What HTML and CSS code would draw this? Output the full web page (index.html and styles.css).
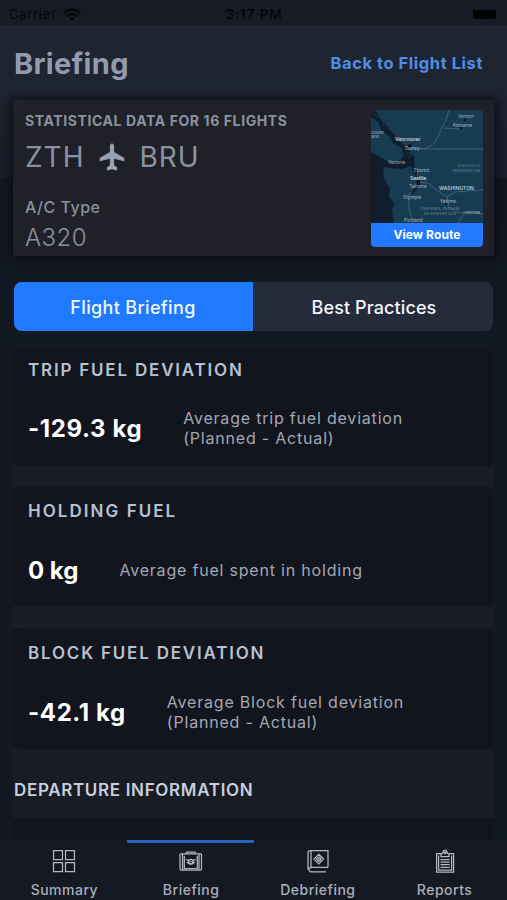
FILE: index.html
```html
<!DOCTYPE html>
<html lang="en">
<head>
<meta charset="utf-8">
<title>Briefing</title>
<link rel="stylesheet" href="styles.css">
</head>
<body>
<div class="app">
  <div class="status">
    <div class="status-left"><span class="carrier">Carrier</span>
      <svg class="wifi" width="18" height="13" viewBox="0 0 18 13"><g fill="none" stroke="#05070b" stroke-width="2.6"><path d="M1 5Q9-2 17 5"/><path d="M4 8.3Q9 4 14 8.3"/></g><path d="M6.3 10.2Q9 8 11.7 10.2L9 12.8Z" fill="#05070b"/></svg>
    </div>
    <span class="time">3:17 PM</span>
    <div class="status-right"><span class="battery"></span></div>
  </div>
  <header class="header">
    <h1 class="title">Briefing</h1>
    <a class="back">Back to Flight List</a>
  </header>
  <section class="flight">
    <div class="flight-info">
      <div class="stat">STATISTICAL DATA FOR 16 FLIGHTS</div>
      <div class="route"><span>ZTH</span>
        <svg class="plane" width="26" height="28" viewBox="0 0 26 28"><path fill="#98a2b3" d="M13 .5c-1.4 0-2.1 1.4-2.1 3.4v5.2L.7 15v3.3l10.2-2.6v6.6L7.9 24.6v2.9l5.1-1.2 5.1 1.2v-2.9l-3-2.3v-6.6l10.2 2.6V15L15.1 9.1V3.9c0-2-.7-3.4-2.1-3.4z"/></svg>
        <span>BRU</span></div>
      <div class="label">A/C Type</div>
      <div class="aircraft">A320</div>
    </div>
    <div class="route-box">
      <svg class="map" width="112" height="113" viewBox="0 0 112 113">
        <rect width="112" height="113" fill="#173c52"/>
        <path fill="#101d2d" d="M4 0L0 0V7L7 12 11 21 19 27 22 33 31 38 33 46 28 51 21 54 13 49 0 42V113H23L21 99 24 94 18 87 19 78 13 68 12 57 19 58 31 59 40 56 44 65 46 76 38 82 42 84 49 75 48 67 44 57 43 47 37 38 28 31 22 23 15 15 9 8Z"/>
        <g fill="none" stroke="#173c52" stroke-width="1"><path d="M3 5l8 4 2 7M34 44l7-2-3 7"/></g>
        <g fill="none" stroke="#426879" stroke-width=".9"><path d="M37 39H112M39 34L43 39H50C68 38 68 19 75 10L78 0M47 58L46 72 57 73Q64 80 76 87L84 82 112 80M46 72L38 85V98L42 113M76 87L78 97 88 103 94 102 112 104M94 102L87 113M73 18L90 19"/></g>
        <g fill="#050f1d"><circle cx="39" cy="36" r="2"/><circle cx="47" cy="72" r="2"/><circle cx="94" cy="10" r="1.2"/><circle cx="90" cy="18" r="1.2"/><circle cx="75" cy="94" r="1"/></g>
        <g class="places">
          <text x="24" y="31" class="city">Vancouver</text><text x="34" y="40">Surrey</text><text x="17" y="54">Victoria</text><text x="43" y="62">Everett</text><text x="39" y="70" class="city">Seattle</text><text x="38" y="78">Tacoma</text><text x="32" y="89">Olympia</text><text x="69" y="93">Yakima</text><text x="33" y="112">Portland</text><text x="87" y="8">Vernon</text><text x="82" y="17">Kelowna</text><text x="0" y="24" class="small">couver</text><text x="0" y="28" class="small">land</text><text x="94" y="104" class="small">Kennew</text>
          <text x="68" y="80" class="state">WASHINGTON</text>
          <text x="87" y="57" class="land">COLVILLE</text><text x="82" y="62" class="land narrow">RESERVATION</text><text x="50" y="100" class="land">YAKAMA INDIAN</text><text x="53" y="104.5" class="land">RESERVATION</text>
        </g>
      </svg>
      <button class="view">View Route</button>
    </div>
  </section>
  <nav class="tabs"><div class="tab tab-on"><span>Flight Briefing</span></div><div class="tab tab-off"><span>Best Practices</span></div></nav>
  <main class="content">
    <article class="card card-first"><h2>TRIP FUEL DEVIATION</h2><div class="row"><strong>-129.3 kg</strong><p>Average trip fuel deviation<br>(Planned - Actual)</p></div></article>
    <article class="card"><h2 class="wide">HOLDING FUEL</h2><div class="row"><strong class="zero">0 kg</strong><p>Average fuel spent in holding</p></div></article>
    <article class="card card-last"><h2>BLOCK FUEL DEVIATION</h2><div class="row"><strong>-42.1 kg</strong><p>Average Block fuel deviation<br>(Planned - Actual)</p></div></article>
    <h2 class="departure">DEPARTURE INFORMATION</h2>
    <div class="next-card"></div>
  </main>
  <footer class="bar">
    <div class="item"><svg width="24" height="24" viewBox="0 0 24 24"><g class="ic"><path d="M1.500 1.500h9v9h-9zM13.500 1.500h9v9h-9zM1.500 13.500h9v9h-9zM13.500 13.500h9v9h-9z"/></g></svg><span>Summary</span></div>
    <div class="item item-on"><svg width="24" height="24" viewBox="0 0 24 24"><g class="ic"><rect x="1" y="4.800" width="21.500" height="16.200" rx="1"/><path d="M3.500 5v16M20 5v16M6.800 4.500l.7-1.500h8.500l.7 1.500M5.300 6.800v12.700h13V6.800"/><path d="M6.800 10.500l3 .8M16.800 10.500l-3 .8M7.800 13q4 4 8 0"/><circle cx="11.8" cy="12.500" r="2.200"/></g><circle cx="11.8" cy="12.500" r=".8" fill="#c0c4cc"/></svg><span>Briefing</span></div>
    <div class="item"><svg width="24" height="24" viewBox="0 0 24 24"><g class="ic"><path d="M22 18.300H4.500a2.400 2.400 0 0 0 0 4.500H20M2 20.500V3.500Q2 1.500 4.100 1.500H22V18.300M5 1.500v16.500M12.800 5.300l4.800 4.800-4.800 4.800-4.800-4.800z"/><circle cx="12.800" cy="10.100" r="2"/><path d="M12 11l1.800-1.800"/></g></svg><span>Debriefing</span></div>
    <div class="item"><svg width="24" height="24" viewBox="0 0 24 24"><g class="ic"><path d="M8 4.500H3.600v18.500h17V4.500H16M5.600 6.500v14.500h13V6.500M8 7.500V5l2-.8Q9.500 1.300 12 1.300T14 4.200l2 .8V7.500zM7.500 10.500h9.200M7.500 13h9.200M7.500 15.600h9.200M7.500 18.300h9.200"/><circle cx="12" cy="3.800" r=".7"/></g></svg><span>Reports</span></div>
  </footer>
</div>
</body>
</html>
```
FILE: styles.css
```css
* { box-sizing: border-box; }
body { margin: 0; background: #121923; font-family: Inter, "Noto Sans", sans-serif; }
h1, h2, p { margin: 0; }
span, strong, a { white-space: nowrap; }
.app { width: 507px; height: 900px; display: flex; flex-direction: column; overflow: hidden; background: linear-gradient(#1e2531 0 92px, #1b202d 178px, #121721 178px, #121923 270px); }
.status { height: 25px; flex: none; display: grid; grid-template-columns: 1fr auto 1fr; align-items: center; padding: 3px 11px 0 9px; background: #171b25; color: #05070b; font-size: 13px; line-height: 20px; letter-spacing: .7px; }
.status-left { display: flex; align-items: center; gap: 6px; }
.time { padding-left: 3px; font-weight: 600; font-size: 13.5px; letter-spacing: .9px; }
.status-right { display: flex; justify-content: flex-end; }
.battery { width: 23px; height: 9px; border-radius: 2px; background: #020305; }
.header { height: 75px; flex: none; display: flex; align-items: center; justify-content: space-between; padding: 2px 24px 0 14px; }
.title { color: #919cb0; font-size: 29px; line-height: 36px; font-weight: 700; letter-spacing: .3px; }
.back { color: #4d8ee9; font-size: 16.5px; font-weight: 700; letter-spacing: .55px; padding-bottom: 2px; }
.flight { height: 156px; flex: none; margin: 0 13px; padding: 10px 11px 0 12px; display: flex; justify-content: space-between; background: #202128; box-shadow: 0 2px 12px 3px #0b0d17; }
.flight-info { color: #8a91a1; }
.stat { font-size: 14px; line-height: 22px; font-weight: 700; letter-spacing: .6px; white-space: nowrap; }
.route { display: flex; align-items: center; height: 50px; font-size: 28px; letter-spacing: 1px; }
.plane { margin: 0 15px 0 14px; }
.label { margin-top: 14px; font-size: 16px; line-height: 22px; font-weight: 500; letter-spacing: .5px; }
.aircraft { padding-top: 2px; font-size: 24px; line-height: 36px; font-weight: 300; letter-spacing: .4px; }
.route-box { width: 112px; height: 137px; border-radius: 4px; overflow: hidden; }
.map { display: block; }
.places { fill: #a5b8bf; font-size: 4.7px; }
.small { font-size: 4px; }
.city { font-size: 5.2px; font-weight: 600; fill: #c6d0d3; letter-spacing: -.2px; }
.state { font-size: 5px; font-weight: 600; fill: #b9c8cd; }
.land { font-size: 4px; letter-spacing: .5px; fill: #70909b; }
.narrow { font-size: 3.6px; letter-spacing: .25px; }
.view { width: 112px; height: 24px; padding: 0; border: 0; display: block; border-radius: 0 0 3px 3px; background: #2379ff; color: #fff; font: 700 12px/24px Inter, sans-serif; letter-spacing: .1px; }
.tabs { height: 49px; flex: none; margin: 26px 14px 0; display: flex; border-radius: 8px; overflow: hidden; background: #252b3b; }
.tab { display: flex; align-items: center; justify-content: center; padding-top: 1px; color: #f4f6fb; font-size: 18px; font-weight: 500; }
.tab-on { width: 239px; background: #207aff; letter-spacing: .35px; padding-right: 1px; }
.tab-off { flex: 1; letter-spacing: .1px; padding-left: 2px; }
.content { flex: 1; margin: 17px 13px 0; background: #191b25; }
.card { height: 120px; margin: 0 0 21px; padding: 13px 15px 0; background: #12141e; border-radius: 5px; }
.card-first { height: 118px; padding-top: 11px; }
.card-last { height: 121px; padding-top: 14px; }
.card h2 { color: #b8c1d1; font-size: 17px; line-height: 23px; font-weight: 600; letter-spacing: 1.8px; white-space: nowrap; }
.card .wide { letter-spacing: 2.05px; }
.row { height: 40px; margin-top: 27px; display: flex; align-items: center; gap: 41px; }
.row strong { color: #fff; font-size: 24px; line-height: 30px; padding-top: 1px; font-weight: 700; letter-spacing: .6px; }
.row .zero { letter-spacing: 0; }
.row p { color: #a3a8b4; font-size: 16px; line-height: 20px; letter-spacing: .8px; white-space: nowrap; }
.card-first .row { margin-top: 26px; }
.departure { margin: 30px 0 17px; padding-left: 1px; color: #c7cedd; font-size: 17px; line-height: 22px; font-weight: 600; letter-spacing: .67px; }
.next-card { height: 22px; background: #12141e; }
.bar { height: 60px; flex: none; display: flex; background: #141923; }
.item { flex: 1; border-top: 3px solid transparent; display: flex; flex-direction: column; align-items: center; padding: 6px 0 0 2px; color: #a9afbb; font-size: 14px; line-height: 20px; font-weight: 500; letter-spacing: .5px; }
.item-on { border-color: #2563bd; }
.item svg { margin-bottom: 7px; flex: none; }
.ic { fill: none; stroke: #b4b8c1; stroke-width: 1.25; }
```
